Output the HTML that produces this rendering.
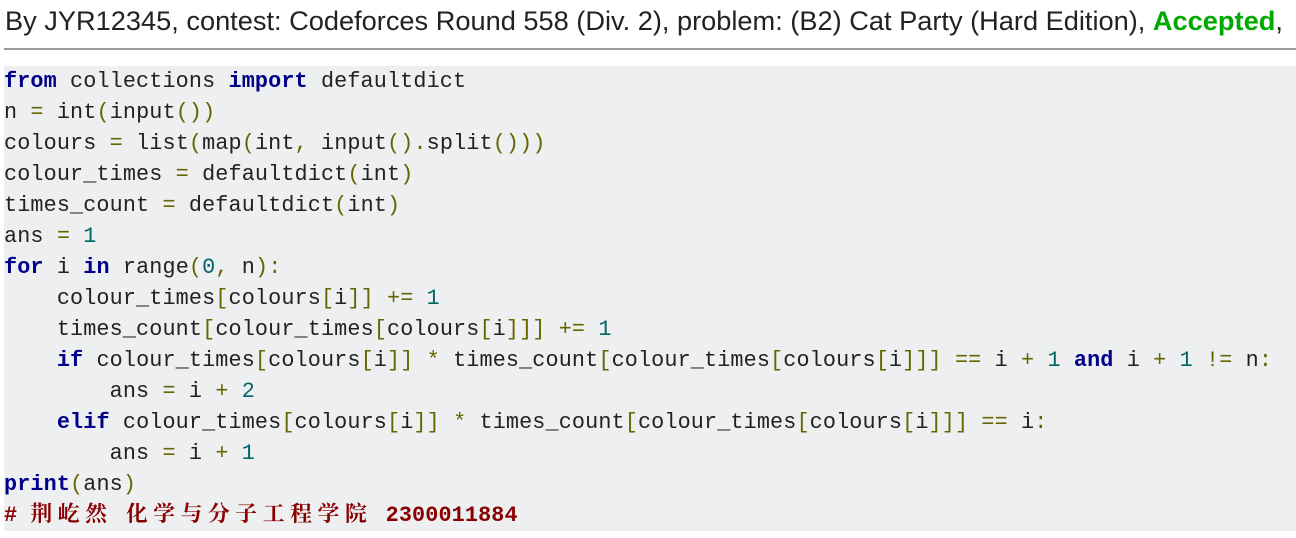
<!DOCTYPE html>
<html><head><meta charset="utf-8"><style>
body{margin:0;background:#fff;width:1296px;height:538px;overflow:hidden;}
.h{position:absolute;left:5px;top:5px;font:27.2px "Liberation Sans",sans-serif;color:#222;white-space:nowrap;}
.h b{color:#0a0;}
.hr{position:absolute;left:4px;right:0;top:48px;height:2px;background:#999;}
pre{position:absolute;left:4px;right:0;top:66px;margin:0;background:#eeeff1;font:21.8px/31px "Liberation Mono","Noto Serif CJK SC",monospace;color:#222;height:465px;letter-spacing:0.125px;}
.k{color:#008;font-weight:bold;}
.p{color:#660;}
.n{color:#066;}
.c{color:#800;font-weight:bold;}
.z{letter-spacing:5.6px;}
</style></head><body>
<div class="h">By JYR12345, contest: Codeforces Round 558 (Div. 2), problem: (B2) Cat Party (Hard Edition), <b>Accepted</b>,</div>
<div class="hr"></div>
<pre><span class="k">from</span> collections <span class="k">import</span> defaultdict
n <span class="p">=</span> int<span class="p">(</span>input<span class="p">())</span>
colours <span class="p">=</span> list<span class="p">(</span>map<span class="p">(</span>int<span class="p">,</span> input<span class="p">().</span>split<span class="p">()))</span>
colour_times <span class="p">=</span> defaultdict<span class="p">(</span>int<span class="p">)</span>
times_count <span class="p">=</span> defaultdict<span class="p">(</span>int<span class="p">)</span>
ans <span class="p">=</span> <span class="n">1</span>
<span class="k">for</span> i <span class="k">in</span> range<span class="p">(</span><span class="n">0</span><span class="p">,</span> n<span class="p">):</span>
    colour_times<span class="p">[</span>colours<span class="p">[</span>i<span class="p">]]</span> <span class="p">+=</span> <span class="n">1</span>
    times_count<span class="p">[</span>colour_times<span class="p">[</span>colours<span class="p">[</span>i<span class="p">]]]</span> <span class="p">+=</span> <span class="n">1</span>
    <span class="k">if</span> colour_times<span class="p">[</span>colours<span class="p">[</span>i<span class="p">]]</span> <span class="p">*</span> times_count<span class="p">[</span>colour_times<span class="p">[</span>colours<span class="p">[</span>i<span class="p">]]]</span> <span class="p">==</span> i <span class="p">+</span> <span class="n">1</span> <span class="k">and</span> i <span class="p">+</span> <span class="n">1</span> <span class="p">!=</span> n<span class="p">:</span>
        ans <span class="p">=</span> i <span class="p">+</span> <span class="n">2</span>
    <span class="k">elif</span> colour_times<span class="p">[</span>colours<span class="p">[</span>i<span class="p">]]</span> <span class="p">*</span> times_count<span class="p">[</span>colour_times<span class="p">[</span>colours<span class="p">[</span>i<span class="p">]]]</span> <span class="p">==</span> i<span class="p">:</span>
        ans <span class="p">=</span> i <span class="p">+</span> <span class="n">1</span>
<span class="k">print</span><span class="p">(</span>ans<span class="p">)</span>
<span class="c"># <span class="z">荆屹然</span> <span class="z">化学与分子工程学院</span> 2300011884</span></pre>
</body></html>
